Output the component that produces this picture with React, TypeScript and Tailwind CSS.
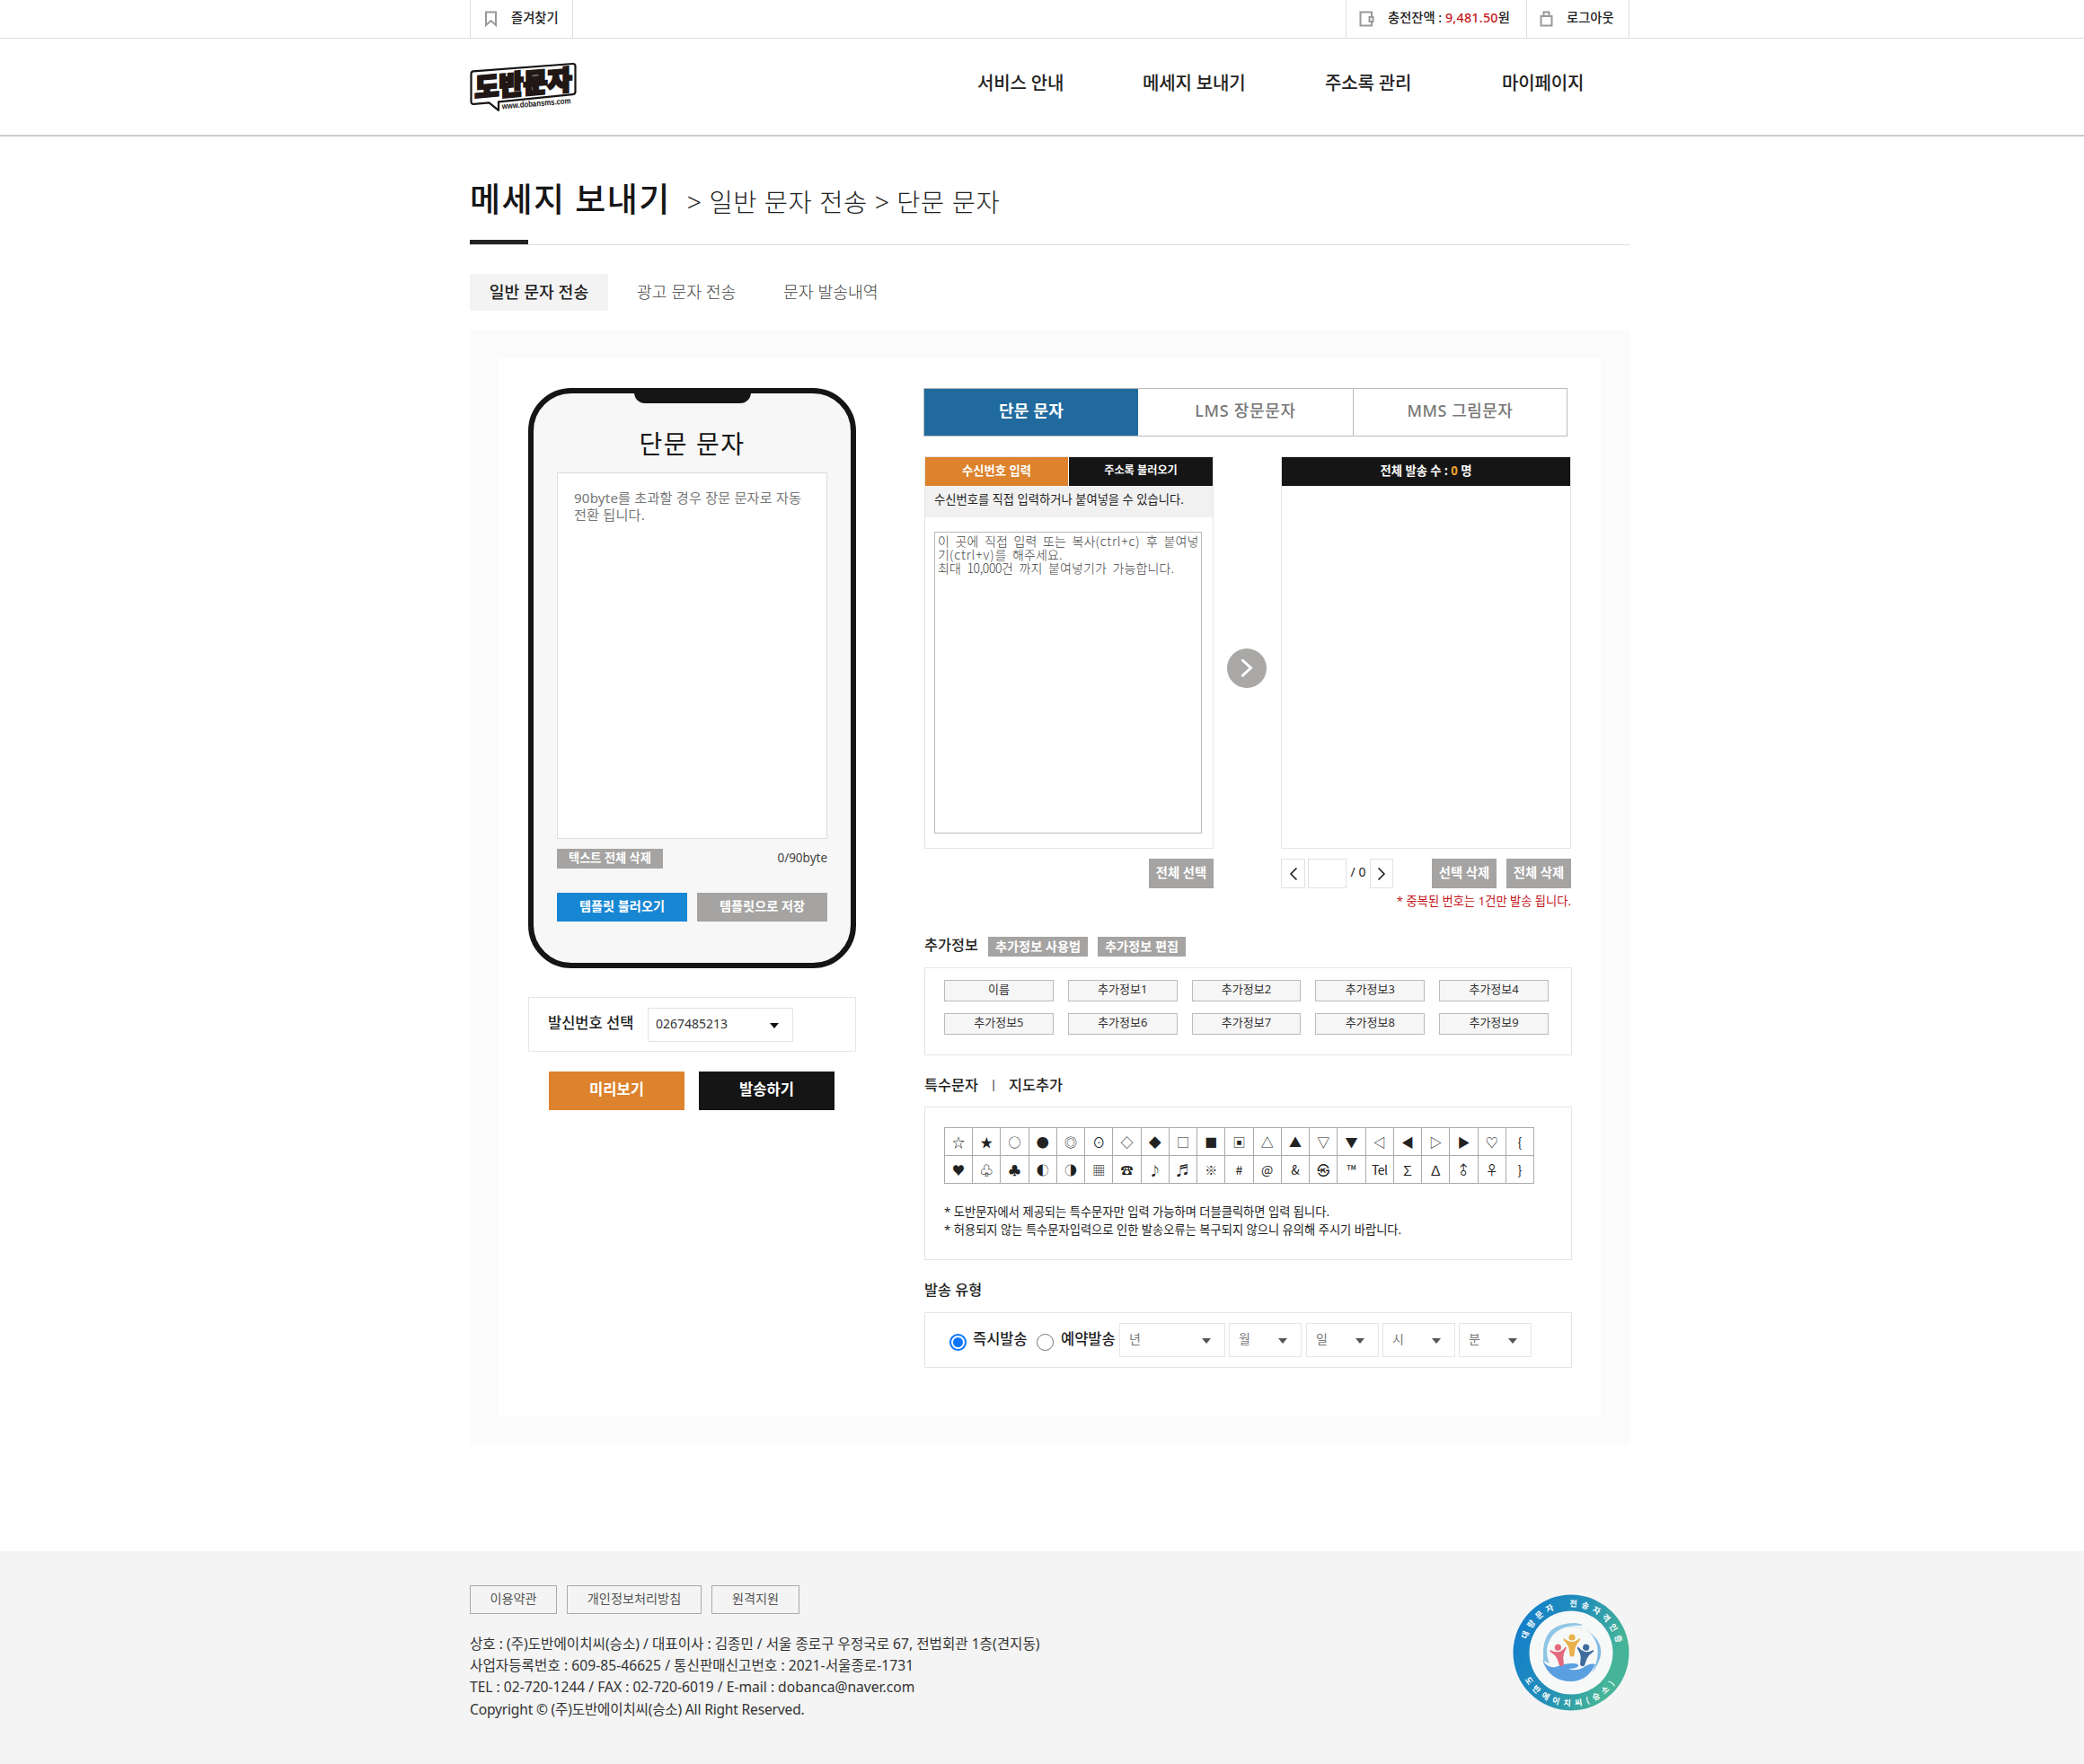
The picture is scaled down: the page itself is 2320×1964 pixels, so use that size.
import type { ReactNode } from 'react';

const Caret = ({ className = '' }: { className?: string }) => (
  <svg className={'h-[6px] w-[10px] ' + className} viewBox="0 0 10 6">
    <path d="M0 0h10L5 6z" fill="currentColor" />
  </svg>
);

const Logo = () => (
  <svg className="h-[56px] w-[122px] overflow-visible" viewBox="0 0 122 56">
    <path
      d="M4 10.300 L114.500 2 Q117.500 1.800 117.500 5 V33 Q117.500 35.800 114.500 36.100 L32 44.300 V53.800 L21.500 45.300 L4.500 46.800 Q1.500 47 1.500 44 V13.300 Q1.500 10.500 4 10.300 Z"
      fill="#fff"
      stroke="#181414"
      strokeWidth="2.200"
      strokeLinejoin="round"
    />
    <g transform="translate(5.500 39.800) skewY(-5)">
      <text
        x="0"
        y="0"
        textLength="108"
        lengthAdjust="spacingAndGlyphs"
        fontSize="30"
        fontWeight="900"
        fill="#211715"
        stroke="#211715"
        strokeWidth="2.600"
        fontFamily="'Noto Sans CJK KR', sans-serif"
      >
        도반문자
      </text>
    </g>
    <text
      transform="translate(36 52.500) rotate(-4.800)"
      textLength="77"
      lengthAdjust="spacingAndGlyphs"
      fontSize="9.500"
      fontWeight="700"
      fill="#211715"
      fontFamily="'Liberation Sans', sans-serif"
    >
      www.dobansms.com
    </text>
  </svg>
);

const Person = ({ x, y, r, color }: { x: number; y: number; r: number; color: string }) => (
  <g transform={`translate(${x} ${y}) rotate(${r})`} fill={color}>
    <circle cx="0" cy="-8" r="3.600" />
    <path d="M-9 -7 Q-4 -3 0 -3 Q4 -3 8.500 -7 Q10 -6 8.500 -4.500 Q4.500 0 3.500 4 L2.500 12 Q0 15 -2.500 12 L-3.500 4 Q-4.500 0 -9.500 -5 Z" />
  </g>
);

const Seal = () => (
  <svg className="size-[130px]" viewBox="-65 -65 130 130">
    <defs>
      <linearGradient id="ring" x1="0" y1="0.300" x2="1" y2="0.700">
        <stop offset="0" stopColor="#137ecb" />
        <stop offset="0.450" stopColor="#238fb8" />
        <stop offset="0.850" stopColor="#45b498" />
      </linearGradient>
      <path id="top-arc" d="M-51.500 0 A51.500 51.500 0 0 1 51.500 0" />
      <path id="bottom-arc" d="M-59.500 0 A59.500 59.500 0 0 0 59.500 0" />
    </defs>
    <circle r="64.500" fill="url(#ring)" />
    <circle r="46.500" fill="#f7f8f8" />
    <g fill="#fff" fontFamily="'Noto Sans CJK KR', sans-serif" fontSize="9" fontWeight="700">
      <text>
        <textPath href="#top-arc" startOffset="15" textLength="136" lengthAdjust="spacing">
          대량문자&nbsp;&nbsp;전송자격인증
        </textPath>
      </text>
      <text>
        <textPath href="#bottom-arc" startOffset="31" textLength="119" lengthAdjust="spacing">
          도반에이치씨(승소)
        </textPath>
      </text>
    </g>
    <path d="M-31 -3 Q-29 -33 4 -33 Q12 -32 13 -30 Q-22 -32 -27 -4 Q-27 6 -24 12 L-31 9 Z" fill="#8fc6e6" />
    <path d="M-5 -28 Q22 -32 29 -8 Q32 8 22 24 Q40 2 29 -14 Q17 -31 -5 -28Z" fill="#7fb9e2" />
    <path
      d="M-32 8 Q-26 18 -17 16 Q-8 12 2 12 Q9 12 8 15 Q6 18 -3 18 Q5 21 13 17 Q21 11 27 13 Q18 32 0 32 Q-24 32 -32 8Z"
      fill="#5a9fe0"
    />
    <Person x={1} y={-9} r={0} color="#e9b14c" />
    <Person x={-13} y={2} r={-12} color="#e3697f" />
    <Person x={15} y={2} r={12} color="#3f6c9c" />
  </svg>
);

const navItems = [
  { label: '서비스 안내', w: 'w-[184px]' },
  { label: '메세지 보내기', w: 'w-[203px]' },
  { label: '주소록 관리', w: 'w-[197px]' },
  { label: '마이페이지', w: 'w-[142px]' },
];

const symbols = [
  Array.from('☆★○●◎⊙◇◆□■▣△▲▽▼◁◀▷▶♡{'),
  [...Array.from('♥♧♣◐◑▦☎♪♬※#@&㉿™'), 'Tel', ...Array.from('∑∆♂♀}')],
];

const symbolStyle = (s: string) => {
  if (s === '♂') return '-rotate-45';
  if (s === 'Tel') return 'tracking-[-0.500px]';
  return '';
};

const GreyButton = ({ className, children }: { className: string; children: ReactNode }) => (
  <button className={'flex items-center justify-center bg-[#a5a4a3] pb-px font-bold whitespace-nowrap text-white ' + className}>
    {children}
  </button>
);

const Select = ({ className, label }: { className: string; label: string }) => (
  <div className={'flex h-[38px] items-center justify-between border border-[#e6e6e6] pr-[15px] pl-[10px] text-[14px] text-[#777] ' + className}>
    <span className="-mt-[4px]">{label}</span>
    <Caret className="mt-[2px] text-[#555]" />
  </div>
);

const TopBar = () => (
  <div className="h-[43px] border-b border-[#ddd]">
    <div className="ml-[523px] flex h-[42px] w-[1291px] justify-between text-[14.300px] font-medium text-[#222]">
      <div className="flex w-[115px] items-center border-x border-[#ddd] pl-[15px]">
        <svg className="mr-[15px] h-[18px] w-[15px]" viewBox="0 0 15 18" fill="none" stroke="#999" strokeWidth="2">
          <path d="M2 1.500h11v14.500l-5.500-5l-5.500 5z" />
        </svg>
        <span className="-mt-[2px]">즐겨찾기</span>
      </div>
      <div className="flex">
        <div className="flex w-[201px] items-center border-l border-[#ddd] pl-[14px]">
          <svg className="mr-[15px] h-[18px] w-[17px]" viewBox="0 0 17 18" fill="none" stroke="#999" strokeWidth="2">
            <path d="M14 6V1.500H1.500v15H14V13M11.500 7h4v5h-4z" />
          </svg>
          <span className="-mt-[2px] whitespace-nowrap">
            충전잔액 : <span className="tracking-[0.250px] text-[#c4161c]">9,481.50</span>원
          </span>
        </div>
        <div className="flex w-[115px] items-center border-x border-[#ddd] pl-[14px]">
          <svg className="mr-[15px] h-[18px] w-[15px]" viewBox="0 0 15 18" fill="none" stroke="#999" strokeWidth="2">
            <path d="M1.500 6h12v10.500h-12zM4.500 6V1.500h6V6" />
          </svg>
          <span className="-mt-[2px]">로그아웃</span>
        </div>
      </div>
    </div>
  </div>
);

const Header = () => (
  <header className="h-[109px] border-b-2 border-[#ccc]">
    <div className="ml-[523px] flex w-[1291px] justify-between">
      <div className="pt-[26px]">
        <Logo />
      </div>
      <nav className="flex w-[726px] pt-[35px] text-[20px] leading-[30px] font-medium tracking-[-0.150px] text-[#222]">
        {navItems.map((n) => (
          <a key={n.label} className={n.w + ' shrink-0 whitespace-nowrap'}>
            {n.label}
          </a>
        ))}
      </nav>
    </div>
  </header>
);

const PageTitle = () => (
  <div className="relative h-[121px] border-b border-[#ddd]">
    <div className="flex items-baseline pt-[42px] whitespace-nowrap">
      <h1 className="text-[37px] leading-[56px] font-medium tracking-[1.400px] text-[#161616]">메세지 보내기</h1>
      <p className="ml-[18px] text-[28.500px] font-light tracking-[0.520px] text-[#222]">&gt; 일반 문자 전송 &gt; 단문 문자</p>
    </div>
    <div className="absolute bottom-0 left-0 h-[5px] w-[65px] bg-[#222]" />
  </div>
);

const Phone = () => (
  <div className="relative h-[646px] w-[365px] rounded-[48px] border-[6px] border-[#151515] bg-[#f7f7f7] px-[26px]">
    <div className="absolute -top-[1px] left-[112px] h-[12px] w-[130px] rounded-b-[13px] bg-[#151515]" />
    <h2 className="pt-[31px] text-center text-[28px] leading-[50px] tracking-[1.500px] text-[#151515]">단문 문자</h2>
    <div className="mt-[7px] h-[408px] border border-[#ddd] bg-white px-[18px] pt-[18px] text-[15.200px] leading-[19px] tracking-[0.150px] whitespace-nowrap text-[#777]">
      90byte를 초과할 경우 장문 문자로 자동
      <br />
      전환 됩니다.
    </div>
    <div className="mt-[11px] flex justify-between">
      <GreyButton className="h-[22px] w-[118px] text-[13.200px]">텍스트 전체 삭제</GreyButton>
      <span className="text-[13.500px] leading-[20px] text-[#444]">0/90byte</span>
    </div>
    <div className="mt-[27px] flex justify-between text-[14.200px] font-bold text-white">
      <button className="h-[32px] w-[145px] bg-[#1787d4] pb-[3px]">템플릿 불러오기</button>
      <button className="h-[32px] w-[145px] bg-[#a5a4a3] pb-[3px]">템플릿으로 저장</button>
    </div>
  </div>
);

const LeftColumn = () => (
  <div className="w-[365px]">
    <Phone />
    <div className="mt-[32px] flex h-[61px] items-center border border-[#e5e5e5] pl-[21px]">
      <span className="-mt-[3px] w-[111px] text-[16.500px] font-medium text-[#222]">발신번호 선택</span>
      <div className="flex h-[38px] w-[162px] items-center justify-between border border-[#e2e2e2] pr-[15px] pl-[8px] text-[14px] text-[#333]">
        <span className="-mt-[3px]">0267485213</span>
        <Caret className="mt-[2px] text-[#111]" />
      </div>
    </div>
    <div className="mt-[22px] flex gap-[16px] pl-[23px] text-[16.600px] font-bold text-white">
      <button className="h-[43px] w-[151px] bg-[#dd822d] pb-[3px]">미리보기</button>
      <button className="h-[43px] w-[151px] bg-[#151515] pb-[2px]">발송하기</button>
    </div>
  </div>
);

const Recipients = () => (
  <div className="mt-[22px] flex w-[720px]">
    <div className="w-[322px]">
      <div className="h-[437px] border border-[#e5e5e5]">
        <div className="flex h-[32px] gap-px font-bold text-white">
          <button className="w-[159px] bg-[#dd822d] pb-px text-[13.300px]">수신번호 입력</button>
          <button className="w-[160px] bg-[#151515] pb-px text-[12.200px]">주소록 불러오기</button>
        </div>
        <p className="h-[35px] bg-[#f1f1f1] pl-[10px] text-[13.300px] leading-[31px] whitespace-nowrap text-[#222]">
          수신번호를 직접 입력하거나 붙여넣을 수 있습니다.
        </p>
        <div className="mt-[16px] ml-[10px] h-[336px] w-[298px] border border-[#bbb] pt-[2px] pl-[3px] font-['Noto_Sans_CJK_KR',sans-serif] text-[14px] leading-[15px] font-light tracking-[0.120px] whitespace-nowrap text-[#444] [word-spacing:3.300px]">
          이 곳에 직접 입력 또는 복사<span className="tracking-[0.750px]">(ctrl+c)</span> 후 붙여넣
          <br />기<span className="tracking-[0.850px]">(ctrl+v)</span>를 해주세요.
          <br />
          최대 <span className="tracking-[-0.400px]">10,000</span>건 까지 붙여넣기가 가능합니다.
        </div>
      </div>
      <div className="mt-[11px] flex justify-end">
        <GreyButton className="h-[33px] w-[72px] text-[14.300px]">전체 선택</GreyButton>
      </div>
    </div>
    <div className="flex w-[75px] pt-[214px] pl-[15px]">
      <svg className="size-[44px]" viewBox="0 0 44 44" fill="none">
        <circle cx="22" cy="22" r="22" fill="#a9a8a7" />
        <path d="M16.500 12.500l10 9l-10 9.500" stroke="#fff" strokeWidth="3" />
      </svg>
    </div>
    <div className="w-[323px]">
      <div className="h-[437px] border border-[#e5e5e5]">
        <div className="h-[32px] bg-[#151515] text-center text-[13.300px] leading-[30px] font-bold text-white">
          전체 발송 수 : <span className="text-[#f0a030]">0</span> 명
        </div>
      </div>
      <div className="mt-[11px] flex h-[33px]">
        <button className="flex w-[27px] items-center justify-center border border-[#e2e2e2]">
          <svg className="h-[14px] w-[8px]" viewBox="0 0 8 14" fill="none" stroke="#111" strokeWidth="1.500">
            <path d="M7.500 0.500L1 7l6.500 6.500" />
          </svg>
        </button>
        <div className="ml-[3px] w-[43px] border border-[#e2e2e2]" />
        <span className="w-[26px] text-center text-[14px] leading-[30px] text-[#222]">/ 0</span>
        <button className="flex w-[26px] items-center justify-center border border-[#e2e2e2]">
          <svg className="h-[14px] w-[8px]" viewBox="0 0 8 14" fill="none" stroke="#111" strokeWidth="1.500">
            <path d="M0.500 0.500L7 7l-6.500 6.500" />
          </svg>
        </button>
        <GreyButton className="ml-auto w-[72px] text-[14.300px]">선택 삭제</GreyButton>
        <GreyButton className="ml-[11px] w-[72px] text-[14.300px]">전체 삭제</GreyButton>
      </div>
      <p className="mt-[4px] h-[20px] text-right text-[13.250px] leading-[20px] whitespace-nowrap text-[#c4161c]">
        * 중복된 번호는 1건만 발송 됩니다.
      </p>
    </div>
  </div>
);

const ExtraInfo = () => (
  <>
    <div className="mt-[30px] flex h-[22px] items-center">
      <span className="-mt-[3px] w-[71px] text-[16.300px] font-medium text-[#222]">추가정보</span>
      <GreyButton className="h-[22px] w-[111px] text-[14.200px]">추가정보 사용법</GreyButton>
      <GreyButton className="ml-[11px] h-[22px] w-[98px] text-[14.200px]">추가정보 편집</GreyButton>
    </div>
    <div className="mt-[12px] h-[98px] border border-[#e5e5e5] pt-[13px] pl-[21px]">
      <div className="grid w-[673px] grid-cols-5 gap-x-[16px] gap-y-[13px]">
        {['이름', ...Array.from({ length: 9 }, (_, i) => `추가정보${i + 1}`)].map((t) => (
          <button key={t} className="h-[24px] border border-[#bbb] bg-[#f6f6f6] pb-[3px] text-[13px] leading-[19px] text-[#333]">
            {t}
          </button>
        ))}
      </div>
    </div>
  </>
);

const SpecialChars = () => (
  <>
    <div className="mt-[21px] flex h-[24px] text-[16.300px] leading-[24px] font-medium text-[#222]">
      <span className="w-[60px]">특수문자</span>
      <span className="w-[34px] text-center text-[12px]">|</span>
      <span>지도추가</span>
    </div>
    <div className="mt-[12px] h-[171px] border border-[#e5e5e5] pt-[22px] pl-[21px]">
      <div className="grid w-[657px] grid-cols-21 border-t border-l border-[#aaa] font-['Noto_Sans_CJK_KR','DejaVu_Sans',sans-serif] text-[14px] text-[#222]">
        {symbols.flat().map((s, i) => (
          <span key={i} className="flex h-[31px] items-center justify-center border-r border-b border-[#aaa]">
            <span className={symbolStyle(s)}>{s}</span>
          </span>
        ))}
      </div>
      <div className="mt-[21px] text-[13.270px] leading-[20px] whitespace-nowrap text-[#222]">
        <p>* 도반문자에서 제공되는 특수문자만 입력 가능하며 더블클릭하면 입력 됩니다.</p>
        <p>* 허용되지 않는 특수문자입력으로 인한 발송오류는 복구되지 않으니 유의해 주시기 바랍니다.</p>
      </div>
    </div>
  </>
);

const SendType = () => (
  <>
    <div className="mt-[21px] h-[24px] text-[16.300px] leading-[24px] font-medium text-[#222]">발송 유형</div>
    <div className="mt-[13px] flex h-[62px] items-center border border-[#e5e5e5] pl-[27px]">
      <span className="mt-[4px] flex size-[19px] items-center justify-center rounded-full border-2 border-[#0a75ff] bg-white">
        <span className="size-[11px] rounded-full bg-[#0a75ff]" />
      </span>
      <span className="-mt-[2px] ml-[7px] w-[71px] text-[16.500px] font-medium text-[#222]">즉시발송</span>
      <span className="mt-[4px] size-[19px] rounded-full border border-[#767676] bg-white" />
      <span className="-mt-[2px] ml-[8px] w-[65px] text-[16.500px] font-medium text-[#222]">예약발송</span>
      <Select label="년" className="w-[118px]" />
      <Select label="월" className="ml-[4px] w-[81px]" />
      <Select label="일" className="ml-[5px] w-[81px]" />
      <Select label="시" className="ml-[4px] w-[81px]" />
      <Select label="분" className="ml-[4px] w-[81px]" />
    </div>
  </>
);

const Footer = () => (
  <footer className="mt-[118px] h-[238px] bg-[#f4f4f4] pt-[38px]">
    <div className="ml-[523px] flex w-[1291px] justify-between">
      <div>
        <div className="flex gap-[11px] text-[14.200px] leading-[28px] text-[#555]">
          <a className="h-[32px] w-[97px] border border-[#aaa] text-center">이용약관</a>
          <a className="h-[32px] w-[150px] border border-[#aaa] text-center">개인정보처리방침</a>
          <a className="h-[32px] w-[98px] border border-[#aaa] text-center">원격지원</a>
        </div>
        <div className="mt-[21px] text-[15.620px] leading-[24.200px] whitespace-nowrap text-[#333]">
          <p>상호 : (주)도반에이치씨(승소) / 대표이사 : 김종민 / 서울 종로구 우정국로 67, 전법회관 1층(견지동)</p>
          <p className="tracking-[0.040px]">사업자등록번호 : 609-85-46625 / 통신판매신고번호 : 2021-서울종로-1731</p>
          <p>TEL : 02-720-1244 / FAX : 02-720-6019 / E-mail : dobanca@naver.com</p>
          <p className="tracking-[-0.200px]">Copyright © (주)도반에이치씨(승소) All Right Reserved.</p>
        </div>
      </div>
      <div className="pt-[10px]">
        <Seal />
      </div>
    </div>
  </footer>
);

export default function App() {
  return (
    <div className="h-[1964px] w-[2320px] overflow-hidden bg-white font-['Noto_Sans','Noto_Sans_CJK_KR',sans-serif]">
      <TopBar />
      <Header />
      <main className="ml-[523px] w-[1291px]">
        <PageTitle />
        <div className="mt-[32px] flex h-[41px] text-[18.300px] leading-[39px] whitespace-nowrap">
          <a className="w-[154px] bg-[#f3f3f3] text-center font-medium text-[#222]">일반 문자 전송</a>
          <a className="w-[163px] pl-[32px] font-light text-[#444]">광고 문자 전송</a>
          <a className="pl-[32px] font-light text-[#444]">문자 발송내역</a>
        </div>
        <div className="mt-[21px] h-[1242px] bg-[#fbfbfb] p-[32px]">
          <div className="flex h-[1178px] bg-white pt-[33px] pl-[33px]">
            <LeftColumn />
            <div className="ml-[76px] w-[721px]">
              <div className="-ml-px flex h-[54px] w-[717px] border border-[#bbb] text-center text-[18px] leading-[49px]">
                <a className="w-[238px] bg-[#206a9e] font-bold tracking-[0.200px] text-white">단문 문자</a>
                <a className="w-[239px] font-medium tracking-[0.700px] text-[#777]">LMS 장문문자</a>
                <a className="w-[238px] border-l border-[#bbb] font-medium tracking-[0.500px] text-[#777]">MMS 그림문자</a>
              </div>
              <Recipients />
              <ExtraInfo />
              <SpecialChars />
              <SendType />
            </div>
          </div>
        </div>
      </main>
      <Footer />
    </div>
  );
}
